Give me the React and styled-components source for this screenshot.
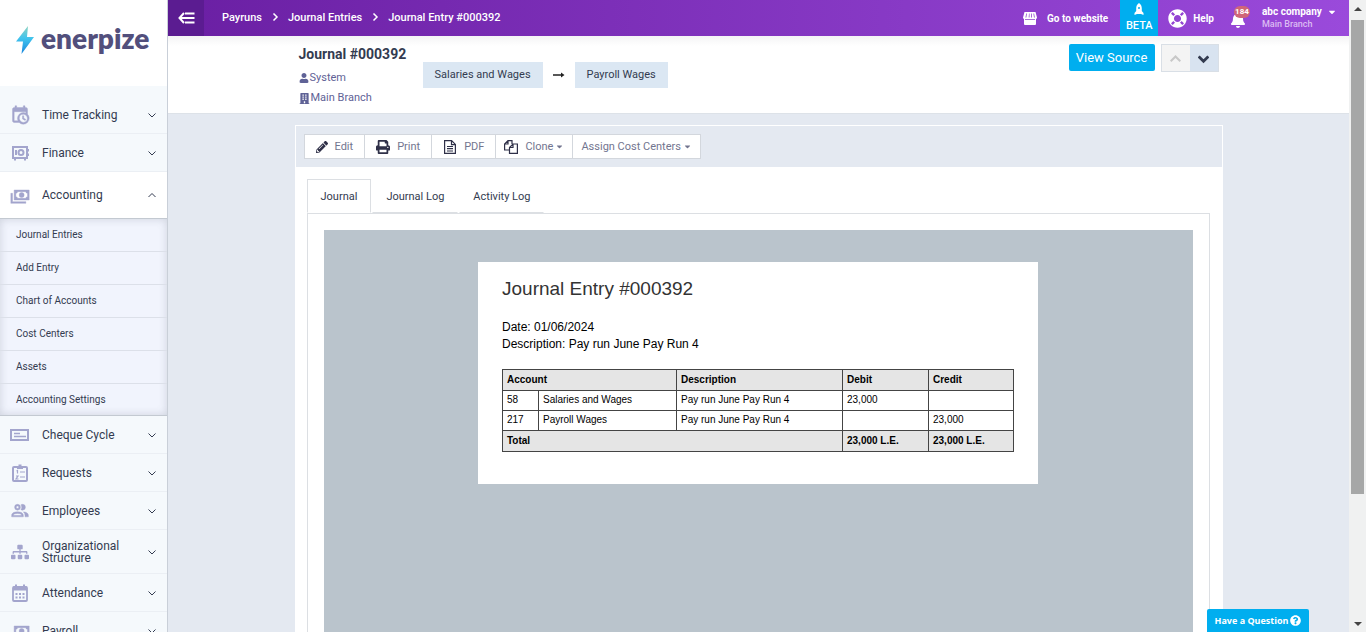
// Journal entry page
import React,{useState} from 'react';
import styled,{createGlobalStyle} from 'styled-components';
import {FaSitemap,FaUser,FaBuilding,FaPencilAlt,FaPrint,FaCaretDown,FaLifeRing,FaBell,FaQuestionCircle} from 'react-icons/fa';

const App=()=>{
    // opened menu
    const[opened,setOpened]=useState('Accounting');
    // selected tab
    const[tab,setTab]=useState('Journal');

    return(
        <Page>
            <GlobalStyle/>
            <Sidebar>
                <Logo href="#home">
                    <BoltIcon/>
                    <span>enerpize</span>
                </Logo>
                <Menu>
                    {menus.map((menu)=>{
                        const isOpen=opened===menu.name;
                        return(
                            <React.Fragment key={menu.name}>
                                <MenuItem $open={isOpen} $tall={menu.tall} onClick={()=>{
                                    setOpened(isOpen?'':menu.name);
                                }}>
                                    <MenuIcon>{menu.icon}</MenuIcon>
                                    <span>{menu.name}</span>
                                    <Chevron up={isOpen} size={8} width={2}/>
                                </MenuItem>
                                {isOpen&&menu.links?(
                                    <SubMenu>
                                        {menu.links.map((link)=>(
                                            <a href="#link" key={link}>{link}</a>
                                        ))}
                                    </SubMenu>
                                ):null}
                            </React.Fragment>
                        )
                    })}
                </Menu>
            </Sidebar>

            <Main>
                <TopBar>
                    <Toggle aria-label="Toggle menu"><CollapseIcon/></Toggle>
                    <Breadcrumb>
                        <a href="#payruns">Payruns</a>
                        <Chevron right size={8} width={3}/>
                        <a href="#entries">Journal Entries</a>
                        <Chevron right size={8} width={3}/>
                        <a href="#entry">Journal Entry #000392</a>
                    </Breadcrumb>
                    <WebsiteLink href="#website"><StoreIcon/>Go to website</WebsiteLink>
                    <Beta href="#beta"><RocketIcon/>BETA</Beta>
                    <HelpLink href="#help"><FaLifeRing size={19}/>Help</HelpLink>
                    <Bell aria-label="Notifications"><FaBell size={16}/><Badge>184</Badge></Bell>
                    <Account>
                        <span>abc company <FaCaretDown size={10}/></span>
                        <small>Main Branch</small>
                    </Account>
                </TopBar>

                <TitleBand>
                    <TitleInner>
                        <TitleInfo>
                            <h1>Journal #000392</h1>
                            <p><FaUser size={10}/>System</p>
                            <p><FaBuilding size={11}/>Main Branch</p>
                        </TitleInfo>
                        <Flow>
                            <Chip href="#salaries">Salaries and Wages</Chip>
                            <ArrowIcon/>
                            <Chip href="#payroll">Payroll Wages</Chip>
                        </Flow>
                        <ViewSource>View Source</ViewSource>
                        <Pager>
                            <button aria-label="Previous" disabled><Chevron up size={11} width={3}/></button>
                            <button aria-label="Next"><Chevron size={11} width={4}/></button>
                        </Pager>
                    </TitleInner>
                </TitleBand>

                <Card>
                    <Toolbar>
                        <Tool><FaPencilAlt size={12}/>Edit</Tool>
                        <Tool><FaPrint size={14}/>Print</Tool>
                        <Tool><FileIcon/>PDF</Tool>
                        <Tool $menu><CopyIcon/>Clone<Caret size={9}/></Tool>
                        <Tool $menu>Assign Cost Centers<Caret size={9}/></Tool>
                    </Toolbar>
                    <Tabs>
                        {tabs.map((name)=>(
                            <Tab key={name} $active={tab===name} onClick={()=>setTab(name)}>{name}</Tab>
                        ))}
                    </Tabs>
                    <TabBody>
                        <Preview>
                            <Paper>
                                <h2>Journal Entry #000392</h2>
                                <p>Date: 01/06/2024</p>
                                <p>Description: Pay run June Pay Run 4</p>
                                <Table>
                                    <colgroup>
                                        <col width="36"/>
                                        <col width="138"/>
                                        <col/>
                                        <col width="86"/>
                                        <col width="85"/>
                                    </colgroup>
                                    <thead>
                                        <tr>
                                            <th colSpan={2}>Account</th>
                                            <th>Description</th>
                                            <th>Debit</th>
                                            <th>Credit</th>
                                        </tr>
                                    </thead>
                                    <tbody>
                                        {rows.map((row)=>(
                                            <tr key={row.code}>
                                                <td>{row.code}</td>
                                                <td>{row.account}</td>
                                                <td>{row.description}</td>
                                                <td>{row.debit}</td>
                                                <td>{row.credit}</td>
                                            </tr>
                                        ))}
                                    </tbody>
                                    <tfoot>
                                        <tr>
                                            <th colSpan={3}>Total</th>
                                            <th>23,000 L.E.</th>
                                            <th>23,000 L.E.</th>
                                        </tr>
                                    </tfoot>
                                </Table>
                            </Paper>
                        </Preview>
                    </TabBody>
                </Card>
            </Main>

            <ScrollTrack>
                <ScrollArrow $up/>
                <ScrollThumb/>
                <ScrollArrow/>
            </ScrollTrack>
            <Question>Have a Question <FaQuestionCircle size={11}/></Question>
        </Page>
    )
}

// icons
const Chevron=({up,right,size,width})=>(
    <svg width={size} height={size} viewBox="0 0 16 16" fill="none" stroke="currentColor" strokeWidth={width}>
        <path d={right?'M5 1l7 7-7 7':up?'M1 12l7-7 7 7':'M1 5l7 7 7-7'}/>
    </svg>
)

const MdiIcon=({d,size=20})=>(
    <svg width={size} height={size} viewBox="0 0 24 24" fill="currentColor" stroke="currentColor" strokeWidth="0.5" fillRule="evenodd"><path d={d}/></svg>
)

const BoltIcon=()=>(
    <svg width="18" height="28" viewBox="0 0 18 28">
        <defs>
            <linearGradient id="bolt" x1="0" y1="0" x2="0" y2="1">
                <stop offset="0" stopColor="#8fd3c0"/>
                <stop offset="0.45" stopColor="#3fc3ee"/>
                <stop offset="1" stopColor="#1a86dc"/>
            </linearGradient>
        </defs>
        <path d="M12 0L0 15.500h7L5.500 28 18 11h-7z" fill="url(#bolt)"/>
    </svg>
)

const SafeIcon=()=>(
    <svg width="18" height="16" viewBox="0 0 18 16" fill="none" stroke="currentColor" strokeWidth="2">
        <rect x="2" y="2" width="14" height="11"/>
        <circle cx="10" cy="7.500" r="2.500"/>
        <path d="M5 5v5M4 13v2.500M14 13v2.500M17 4v2.500M17 8.500v2.500"/>
    </svg>
)

const ChequeIcon=()=>(
    <svg width="20" height="14" viewBox="0 0 20 14" fill="none" stroke="currentColor">
        <rect x="1" y="2" width="17" height="10" strokeWidth="2"/>
        <path d="M4 5.500h6M4 8.500h12" strokeWidth="1.300"/>
    </svg>
)

const ClipboardIcon=()=>(
    <svg width="18" height="18" viewBox="0 0 18 18" fill="none" stroke="currentColor" strokeWidth="2">
        <rect x="2" y="3" width="14" height="14" rx="1"/>
        <path d="M6 3.500h6M7.500 2h3" strokeWidth="3"/>
        <path d="M5.500 7l1-0.500v3M9 8h5M9 13h5M5 12h2l-2 3h2.500" strokeWidth="1.200"/>
    </svg>
)

const CalendarIcon=()=>(
    <svg width="18" height="18" viewBox="0 0 18 18" fill="none" stroke="currentColor" strokeWidth="1.800">
        <rect x="2" y="3" width="14" height="14" rx="1"/>
        <path d="M2 4.500h14" strokeWidth="4"/>
        <path d="M5 0.500v3M13 0.500v3" strokeWidth="2"/>
        <path d="M4.500 10h9M4.500 13.500h9" strokeDasharray="2 1.500" strokeWidth="1.800"/>
    </svg>
)

const CollapseIcon=()=>(
    <svg width="17" height="14" viewBox="0 0 17 14" fill="none" stroke="currentColor" strokeWidth="2">
        <path d="M7 2.500h9.500M1.500 7h15M7 11.500h9.500M6 2L1.500 7 6 12"/>
    </svg>
)

// awning with slits over a solid front
const StoreIcon=()=>(
    <svg width="14" height="13" viewBox="0 0 14 13" fill="currentColor" fillRule="evenodd">
        <path d="M1.500 0h11L14 5.500a1.800 1.800 0 0 1-1 1.500v5a1 1 0 0 1-1 1H2a1 1 0 0 1-1-1V7a1.800 1.800 0 0 1-1-1.500zM3.200 1.500l-0.700 4h0.800l0.600-4zM6 1.500l-0.300 4h0.800v-4zM8 1.500l0.200 4H9l-0.300-4zM10.400 1.500l0.600 4h0.800l-0.700-4zM2 7.200v0.800h10v-0.800z"/>
    </svg>
)

const RocketIcon=()=>(
    <svg width="10" height="12" viewBox="0 0 10 12" fill="currentColor" fillRule="evenodd">
        <path d="M5 0c2.200 1.500 2.800 3.300 2.800 5.500V8L9.500 10v2L7 11H3l-2.500 1v-2L2.200 8V5.500C2.200 3.300 2.800 1.500 5 0zM5 4a1 1 0 1 0 0 2A1 1 0 0 0 5 4z"/>
    </svg>
)

const ArrowIcon=()=>(
    <svg width="12" height="8" viewBox="0 0 12 8"><path d="M0 3.300h8V1.500l3.500 2.500L8 6.500V4.700H0z" fill="#222"/></svg>
)

const FileIcon=()=>(
    <svg width="14" height="14" viewBox="-1 0 14 14" fill="none" stroke="currentColor" strokeWidth="1.200">
        <path d="M0.600 0.600h7l3.800 3.800v9H0.600zM7.500 0.600v4h4M3 6.500h6M3 8.700h6M3 11h6"/>
    </svg>
)

const CopyIcon=()=>(
    <svg width="14" height="14" viewBox="0 0 14 14" fill="none" stroke="currentColor" strokeWidth="1.200">
        <path d="M5 10H0.600V4L4 0.600h4V4M4 0.600V4H0.600M9 4h4.400v9.400H5.500V7.500zM9 4v3.500H5.500"/>
    </svg>
)

// data
const cash='M14,9A3,3 0 0,1 17,12A3,3 0 0,1 14,15A3,3 0 0,1 11,12A3,3 0 0,1 14,9M9,8A2,2 0 0,1 7,10V14A2,2 0 0,1 9,16H19A2,2 0 0,1 21,14V10A2,2 0 0,1 19,8H9';
const calendarClock='M15,13H16.5V15.82L18.94,17.23L18.19,18.53L15,16.69V13M19,8H5V19H9.67C9.24,18.09 9,17.07 9,16A7,7 0 0,1 16,9C17.07,9 18.09,9.24 19,9.67V8M5,21C3.89,21 3,20.1 3,19V5C3,3.89 3.89,3 5,3H6V1H8V3H16V1H18V3H19A2,2 0 0,1 21,5V11.1C22.24,12.36 23,14.09 23,16A7,7 0 0,1 16,23C14.09,23 12.36,22.24 11.1,21H5M16,11.15A4.85,4.85 0 0,0 11.15,16C11.15,18.68 13.32,20.85 16,20.85A4.85,4.85 0 0,0 20.85,16C20.85,13.32 18.68,11.15 16,11.15Z';
const people='M13.07 10.41A5 5 0 0 0 13.07 4.59A3.39 3.39 0 0 1 15 4A3.5 3.5 0 0 1 15 11A3.39 3.39 0 0 1 13.07 10.41M5.5 7.5A3.5 3.5 0 1 1 9 11A3.5 3.5 0 0 1 5.5 7.5M7.5 7.5A1.5 1.5 0 1 0 9 6A1.5 1.5 0 0 0 7.5 7.5M16 17V19H2V17S2 13 9 13 16 17 16 17M14 17C13.86 16.22 12.67 15 9 15S4.07 16.31 4 17M15.95 13A5.32 5.32 0 0 1 18 17V19H22V17S22 13.37 15.94 13Z';

const menus=[
    {name:'Time Tracking',icon:<MdiIcon d={calendarClock}/>},
    {name:'Finance',icon:<SafeIcon/>},
    {
        name:'Accounting',
        icon:<MdiIcon d={`M5,6H23V18H5V6${cash}M1,10H3V20H19V22H1V10Z`}/>,
        links:['Journal Entries','Add Entry','Chart of Accounts','Cost Centers','Assets','Accounting Settings'],
    },
    {name:'Cheque Cycle',icon:<ChequeIcon/>},
    {name:'Requests',icon:<ClipboardIcon/>},
    {name:'Employees',icon:<MdiIcon d={people}/>},
    {name:'Organizational Structure',icon:<FaSitemap size={18}/>,tall:true},
    {name:'Attendance',icon:<CalendarIcon/>},
    {name:'Payroll',icon:<MdiIcon d={`M5,6H23V18H5V6${cash}`}/>},
]

const tabs=['Journal','Journal Log','Activity Log'];

const rows=[
    {code:58,account:'Salaries and Wages',description:'Pay run June Pay Run 4',debit:'23,000',credit:''},
    {code:217,account:'Payroll Wages',description:'Pay run June Pay Run 4',debit:'',credit:'23,000'},
]

const GlobalStyle=createGlobalStyle`
    *{box-sizing:border-box;}
    body{
        margin:0;
        font-family:Roboto,"Liberation Sans",sans-serif;
        font-size:11px;
        color:#333b50;
    }
    a{color:inherit;text-decoration:none;}
    button{
        margin:0;
        padding:0;
        border:0;
        background:none;
        font:inherit;
        color:inherit;
        cursor:pointer;
    }
    h1,h2,p{margin:0;}
    svg{flex:none;}
`;

const Page=styled.div`
    display:flex;
    height:100vh;
    overflow:hidden;
    background:#e4e9f1;
`;

const Sidebar=styled.aside`
    width:168px;
    flex:none;
    display:flex;
    flex-flow:column;
    overflow:hidden;
    background:#f5f9fc;
    border-right:1px solid #c9cfd8;
`;

const Logo=styled.a`
    flex:none;
    display:flex;
    align-items:center;
    gap:7px;
    height:86px;
    padding:0 0 6px 16px;
    background:#fff;
    color:#524f7c;
    font-family:Lato,sans-serif;
    font-size:28px;
    font-weight:800;
    line-height:30px;
    span{padding-bottom:4px;}
`;

const Menu=styled.nav`
    display:flex;
    flex-flow:column;
    padding-top:10px;
`;

const MenuItem=styled.button`
    flex:none;
    display:flex;
    align-items:center;
    gap:12px;
    height:${(props)=>props.$open?47:props.$tall?44:38}px;
    padding:0 11px 0 10px;
    border-bottom:1px solid ${(props)=>props.$open?'#c3c9d1':'#ebeff4'};
    background:${(props)=>props.$open?'#fff':'transparent'};
    text-align:left;
    font-size:12px;
    line-height:12px;
    span:nth-child(2){flex:1;}
`;

const MenuIcon=styled.span`
    display:flex;
    justify-content:center;
    width:20px;
    color:#a3a5cd;
`;

const SubMenu=styled.div`
    flex:none;
    background:#f1f4fd;
    box-shadow:inset 0 0 8px rgba(60,70,90,0.2);
    border-bottom:1px solid #c3c9d1;
    a{
        display:flex;
        align-items:center;
        height:33px;
        padding:0 16px 2px;
        font-size:10px;
        border-bottom:1px solid #dce0e9;
    }
    a:last-child{
        height:31px;
        padding-bottom:0;
        border-bottom:0;
    }
`;

const Main=styled.main`
    flex:1;
    min-width:0;
    display:flex;
    flex-flow:column;
`;

const TopBar=styled.header`
    flex:none;
    display:flex;
    align-items:center;
    height:36px;
    background:linear-gradient(90deg,#6a1fa3,#9a4adb);
    color:#fff;
    font-size:10px;
    font-weight:700;
`;

const Toggle=styled.button`
    display:flex;
    align-items:center;
    justify-content:center;
    width:36px;
    height:36px;
    background:#5b1c91;
`;

const Breadcrumb=styled.nav`
    flex:1;
    display:flex;
    align-items:center;
    gap:9px;
    padding:0 0 2px 18px;
    font-size:11px;
    font-weight:500;
`;

const WebsiteLink=styled.a`
    display:flex;
    align-items:center;
    gap:10px;
    padding-right:12px;
`;

const Beta=styled.a`
    display:flex;
    flex-flow:column;
    align-items:center;
    justify-content:flex-end;
    gap:5px;
    width:38px;
    height:36px;
    padding-bottom:4px;
    background:#00aeef;
    font-size:11px;
    font-weight:500;
    line-height:12px;
`;

const HelpLink=styled.a`
    display:flex;
    align-items:center;
    gap:6px;
    padding:0 16px 0 10px;
`;

const Bell=styled.button`
    position:relative;
    display:flex;
    align-items:flex-end;
    width:32px;
    height:20px;
`;

const Badge=styled.span`
    position:absolute;
    top:-2px;
    left:4px;
    width:16px;
    border-radius:6px;
    background:#cf6679;
    font-size:8px;
    line-height:12px;
    text-align:center;
`;

const Account=styled.button`
    display:flex;
    flex-flow:column;
    width:87px;
    text-align:left;
    line-height:12px;
    span{
        display:flex;
        align-items:center;
        gap:5px;
    }
    small{
        font-size:9px;
        font-weight:500;
        color:#dcbcf3;
    }
`;

const TitleBand=styled.section`
    flex:none;
    background:linear-gradient(#f4f4f5,#fff 10px);
    border-bottom:1px solid #dde2e8;
`;

const TitleInner=styled.div`
    display:flex;
    width:calc(100% - 32px);
    max-width:928px;
    height:77px;
    margin:0 auto;
    padding:8px 4px 0;
`;

const TitleInfo=styled.div`
    width:124px;
    h1{
        font-size:14px;
        line-height:20px;
        white-space:nowrap;
        margin-bottom:4px;
    }
    p{
        display:flex;
        align-items:center;
        gap:1px;
        line-height:20px;
        color:#5f6296;
    }
`;

const Flow=styled.div`
    flex:1;
    display:flex;
    align-items:center;
    gap:10px;
    height:61px;
`;

const Chip=styled.a`
    padding:0 12px;
    background:#dbe7f3;
    line-height:26px;
`;

const ViewSource=styled.button`
    width:86px;
    height:27px;
    border-radius:2px;
    background:#00aeef;
    color:#fff;
    font-size:13px;
`;

const Pager=styled.div`
    display:flex;
    height:28px;
    margin-left:6px;
    border:1px solid #d9dfe6;
    button{
        display:flex;
        align-items:center;
        justify-content:center;
        width:28px;
        background:#d8e3f0;
    }
    button:disabled{
        background:#f4f4f4;
        color:#c8c8c8;
    }
`;

const Card=styled.section`
    flex:1;
    display:flex;
    flex-flow:column;
    width:calc(100% - 32px);
    max-width:928px;
    margin:11px auto 0;
    background:#fff;
`;

const Toolbar=styled.div`
    display:flex;
    padding:8px;
    border:1px solid #fff;
    border-bottom:0;
    background:#e4e9f1;
`;

const Tool=styled.button`
    display:flex;
    align-items:center;
    gap:7px;
    height:25px;
    padding:0 ${(props)=>props.$menu?8:11}px;
    border:1px solid #d3d7dd;
    background:#fff;
    color:#72758f;
    & + &{margin-left:-1px;}
    svg{color:#2f3048;}
`;

const Caret=styled(FaCaretDown)`
    && {
        margin-left:-5px;
        color:#72758f;
    }
`;

const Tabs=styled.div`
    display:flex;
    gap:1px;
    margin:12px 12px 0;
`;

const Tab=styled.button`
    height:34px;
    padding:0 13px;
    border:1px solid ${(props)=>props.$active?'#dcdfe3':'transparent'};
    border-bottom-color:${(props)=>props.$active?'#fff':'#dcdfe3'};
`;

const TabBody=styled.div`
    flex:1;
    display:flex;
    margin:0 13px 0 12px;
    padding:16px 16px 0;
    border:1px solid #dcdfe3;
    border-bottom:0;
`;

const Preview=styled.div`
    flex:1;
    padding-top:32px;
    background:#bac4cc;
`;

const Paper=styled.article`
    width:560px;
    max-width:100%;
    margin:0 auto;
    padding:15px 24px 32px;
    background:#fff;
    color:#000;
    font-family:"Liberation Sans",Arial,sans-serif;
    font-size:12px;
    line-height:17px;
    h2{
        margin-bottom:18px;
        color:#333;
        font-size:19px;
        font-weight:400;
        line-height:24px;
    }
`;

const Table=styled.table`
    width:100%;
    margin-top:16px;
    border-collapse:collapse;
    table-layout:fixed;
    font-size:10px;
    line-height:12px;
    th,td{
        height:21px;
        padding:0 4px;
        border:1px solid #444;
        text-align:left;
    }
    td{
        height:20px;
        padding-bottom:2px;
    }
    th{background:#e5e5e5;}
`;

const ScrollTrack=styled.div`
    flex:none;
    display:flex;
    flex-flow:column;
    align-items:center;
    width:17px;
    background:#f0f1f1;
`;

const ScrollThumb=styled.div`
    width:13px;
    height:75%;
    margin-bottom:auto;
    background:#a6a7a7;
`;

const ScrollArrow=styled.span`
    margin:${(props)=>props.$up?'7px 0 9px':'0 0 6px'};
    border:4px solid transparent;
    border-top:${(props)=>props.$up?0:'4px solid #444'};
    border-bottom:${(props)=>props.$up?'4px solid #444':0};
`;

// floats over the bottom right corner
const Question=styled.button`
    position:fixed;
    right:57px;
    bottom:0;
    display:flex;
    align-items:center;
    justify-content:center;
    gap:2px;
    width:102px;
    height:23px;
    border-radius:2px 2px 0 0;
    background:#00aeef;
    color:#fff;
    font-family:"Open Sans",sans-serif;
    font-size:9px;
    font-weight:700;
`;

export default App;
